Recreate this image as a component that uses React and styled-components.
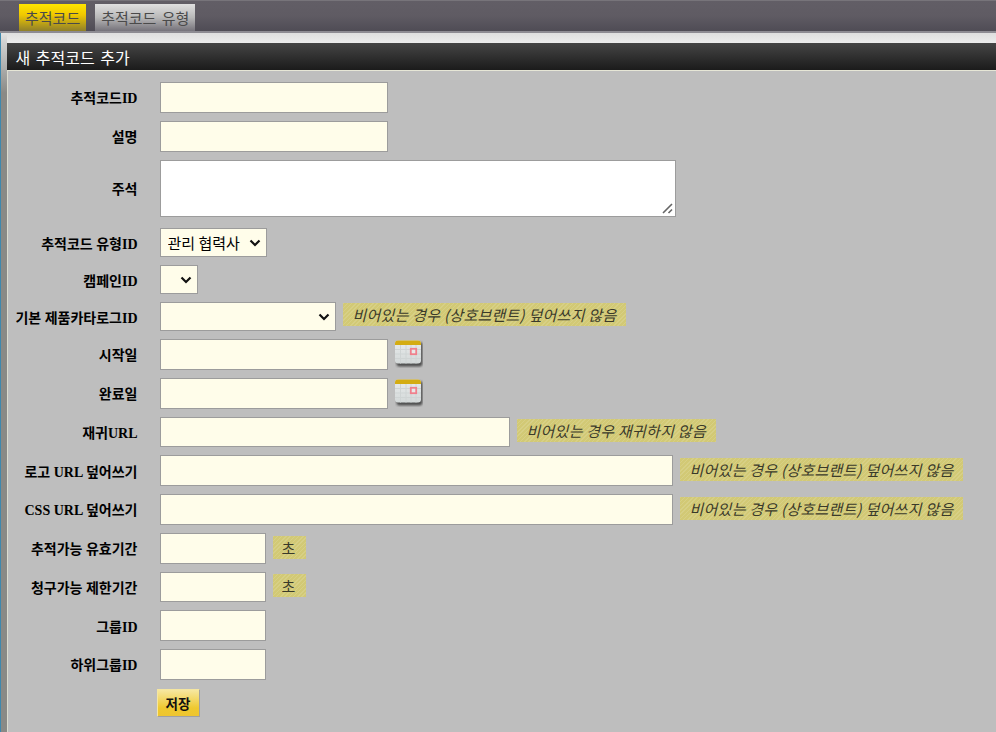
import React from 'react';
import styled, { createGlobalStyle } from 'styled-components';

const chevron =
  "url(\"data:image/svg+xml,%3Csvg xmlns='http://www.w3.org/2000/svg' width='12' height='8' viewBox='0 0 12 8'%3E%3Cpath d='M1.5 1.5 6 6l4.5-4.5' fill='none' stroke='%23111' stroke-width='2.2'/%3E%3C/svg%3E\")";

const GlobalStyle = createGlobalStyle`
  html, body {
    margin: 0;
    padding: 0;
    background-color: #bebebe;
  }
  body {
    font-family: "Liberation Serif", "Noto Sans CJK KR", serif;
    overflow: hidden;
  }
`;

const Page = styled.div`
  width: 996px;
  height: 732px;
  overflow: hidden;
  display: flex;
  flex-direction: column;
`;

const TopBar = styled.div`
  height: 33px;
  flex-shrink: 0;
  padding: 4px 0 0 19px;
  box-sizing: border-box;
  display: flex;
  gap: 9px;
  border-top: 1px solid #77747a;
  border-bottom: 2px solid #8d8b92;
  background: linear-gradient(to bottom, #625e66 0, #5f5b63 50%, #4f4c55 100%);
`;

const Tab = styled.div`
  height: 27px;
  margin-top: -1px;
  padding: 0 6px;
  display: flex;
  align-items: center;
  font-family: "Noto Sans CJK KR", sans-serif;
  font-size: 15px;
  word-spacing: 2px;
  color: #4a4a4a;
  background: ${({ active }) =>
    active
      ? 'linear-gradient(to bottom, #ffe600 0, #f0c800 40%, #8f7f2a 100%)'
      : 'linear-gradient(to bottom, #e0e0e0 0, #b8b8b8 50%, #75727a 100%)'};
`;

const Content = styled.div`
  flex: 1;
  display: flex;
  flex-direction: column;
  border-left: 1.5px solid #3f88ad;
  background: linear-gradient(to bottom, #e2e2e2 0, #d0d0d0 10px, #8a8a86 60px);
`;

const Spacer = styled.div`
  height: 10px;
  flex-shrink: 0;
  margin-left: 5.5px;
  background: linear-gradient(to bottom, #dedede, #ececec);
`;

const TitleBar = styled.div`
  height: 27px;
  flex-shrink: 0;
  margin-left: 5.5px;
  padding-left: 9px;
  box-sizing: border-box;
  display: flex;
  align-items: center;
  font-family: "Noto Sans CJK KR", sans-serif;
  font-size: 16px;
  word-spacing: 2px;
  color: #fff;
  background: linear-gradient(to bottom, #454545 0, #1b1b1b 100%);
`;

const Form = styled.div`
  flex: 1;
  margin-left: 5.5px;
  padding-top: 11px;
  border-top: 1px solid #e6e6d6;
  border-left: 1px solid #dcdcd0;
  display: flex;
  flex-direction: column;
  background-color: #bebebe;
`;

const Row = styled.div`
  display: flex;
  align-items: center;
  flex-shrink: 0;
  height: ${({ h }) => h || 30.75}px;
  margin-bottom: ${({ gap }) => (gap === undefined ? 8 : gap)}px;
`;

const Label = styled.label`
  width: 130px;
  margin-right: 22px;
  flex-shrink: 0;
  text-align: right;
  font-family: "Liberation Serif", "Noto Sans CJK KR", serif;
  font-size: 14px;
  font-weight: bold;
  color: #000;
  white-space: nowrap;
`;

const Field = styled.input`
  width: ${({ w }) => w}px;
  height: 100%;
  box-sizing: border-box;
  padding: 0 4px;
  border: 1px solid #9c9c9c;
  background-color: #fffdea;
`;

const AreaWrap = styled.div`
  position: relative;
  width: 516px;
  height: 57px;
`;

const Area = styled.textarea`
  width: 100%;
  height: 100%;
  box-sizing: border-box;
  border: 1px solid #9c9c9c;
  background-color: #fff;
  display: block;
  resize: none;
`;

const Grip = styled.svg`
  position: absolute;
  right: 3px;
  bottom: 3px;
  pointer-events: none;
`;

const Select = styled.select`
  width: ${({ w }) => w}px;
  height: 100%;
  box-sizing: border-box;
  padding: 0 0 0 7px;
  border: 1px solid #9c9c9c;
  border-radius: 0;
  appearance: none;
  background: #fffdea ${chevron} no-repeat right 5px center;
  color: #000;
  font-family: "Noto Sans CJK KR", sans-serif;
  font-size: 15px;
`;

const Hint = styled.span`
  margin-left: 7px;
  margin-bottom: ${({ raised }) => (raised ? 4 : 2)}px;
  height: 23px;
  padding: 0 10px;
  display: inline-flex;
  align-items: center;
  font-family: "Noto Sans CJK KR", sans-serif;
  font-size: 15px;
  letter-spacing: 0.25px;
  font-style: italic;
  color: #3a3a2a;
  white-space: nowrap;
  background-color: #d2c975;
  background-image: repeating-linear-gradient(135deg, rgba(255, 255, 255, 0.12) 0 1px, transparent 1px 3px);
`;

const Unit = styled(Hint)`
  padding: 0 10px 0 9px;
  font-size: 15px;
  font-style: normal;
`;

const CalendarButton = styled.button`
  margin-left: 7px;
  width: 28px;
  height: 28px;
  padding: 0;
  border: 0;
  background: none;
  display: flex;
`;

const SaveButton = styled.button`
  width: 43px;
  height: 28px;
  margin: 1px 0 0 149px;
  padding: 0;
  flex-shrink: 0;
  font-family: "Noto Sans CJK KR", sans-serif;
  font-size: 13.5px;
  font-weight: bold;
  color: #111;
  border: 1px solid;
  border-color: #f5e6a0 #a0a0a0 #a0a0a0 #f5e6a0;
  background: linear-gradient(to bottom, #f7e7a0 0, #efc92f 70%, #eec530 100%);
`;

const CalendarIcon = () => (
  <svg width="28" height="28" viewBox="0 0 28 28">
    <defs>
      <filter id="calendar-shadow" x="-20%" y="-20%" width="140%" height="140%">
        <feGaussianBlur stdDeviation="0.9" />
      </filter>
      <linearGradient id="calendar-body" x1="0" y1="0" x2="0" y2="1">
        <stop offset="0" stopColor="#e9ecec" />
        <stop offset="1" stopColor="#d3d8d8" />
      </linearGradient>
    </defs>
    <rect x="1.5" y="2" width="26" height="24.5" rx="3" fill="#4f4f4f" filter="url(#calendar-shadow)" />
    <rect x="0" y="0.5" width="26" height="23" rx="3" fill="url(#calendar-body)" />
    <path d="M0 5V3.5A3 3 0 0 1 3 .5h20a3 3 0 0 1 3 3V5z" fill="#d4ac12" />
    <path d="M0 9.5h26M0 14h26M0 18.5h26M5.5 5v18.5M11 5v18.5M16 5v18.5M21 5v18.5" stroke="#cfd4d4" fill="none" />
    <rect x="15.8" y="8.8" width="5.4" height="5.4" fill="#e8e8e8" stroke="#f0808c" strokeWidth="1.8" />
  </svg>
);

const fields = [
  { label: '추적코드ID', kind: 'input', w: 228 },
  { label: '설명', kind: 'input', w: 228 },
  { label: '주석', kind: 'area', h: 57, gap: 11.5 },
  { label: '추적코드 유형ID', kind: 'select', w: 107, value: '관리 협력사', h: 29 },
  { label: '캠페인ID', kind: 'select', w: 38, h: 29 },
  { label: '기본 제품카타로그ID', kind: 'select', w: 176, h: 29, raised: true, hint: '비어있는 경우 (상호브랜트) 덮어쓰지 않음' },
  { label: '시작일', kind: 'date' },
  { label: '완료일', kind: 'date' },
  { label: '재귀URL', kind: 'input', w: 350, hint: '비어있는 경우 재귀하지 않음' },
  { label: '로고 URL 덮어쓰기', kind: 'input', w: 513, hint: '비어있는 경우 (상호브랜트) 덮어쓰지 않음' },
  { label: 'CSS URL 덮어쓰기', kind: 'input', w: 513, hint: '비어있는 경우 (상호브랜트) 덮어쓰지 않음' },
  { label: '추적가능 유효기간', kind: 'input', w: 106, unit: '초' },
  { label: '청구가능 제한기간', kind: 'input', w: 106, unit: '초' },
  { label: '그룹ID', kind: 'input', w: 106 },
  { label: '하위그룹ID', kind: 'input', w: 106 },
];

const renderControl = (item) => {
  if (item.kind === 'area') {
    return (
      <AreaWrap>
        <Area />
        <Grip width="11" height="11" viewBox="0 0 11 11">
          <path d="M1 10 10 1M6.5 10 10 6.5" stroke="#666" strokeWidth="1.6" fill="none" />
        </Grip>
      </AreaWrap>
    );
  }
  if (item.kind === 'select') {
    return (
      <Select w={item.w} defaultValue={item.value || ''}>
        <option value={item.value || ''}>{item.value || ''}</option>
      </Select>
    );
  }
  if (item.kind === 'date') {
    return (
      <>
        <Field w={228} />
        <CalendarButton>
          <CalendarIcon />
        </CalendarButton>
      </>
    );
  }
  return <Field w={item.w} />;
};

const App = () => (
  <>
    <GlobalStyle />
    <Page>
      <TopBar>
        <Tab active>추적코드</Tab>
        <Tab>추적코드 유형</Tab>
      </TopBar>
      <Content>
        <Spacer />
        <TitleBar>새 추적코드 추가</TitleBar>
        <Form>
          {fields.map((item) => (
            <Row key={item.label} h={item.h} gap={item.gap}>
              <Label>{item.label}</Label>
              {renderControl(item)}
              {item.hint && <Hint raised={item.raised}>{item.hint}</Hint>}
              {item.unit && <Unit>{item.unit}</Unit>}
            </Row>
          ))}
          <SaveButton>저장</SaveButton>
        </Form>
      </Content>
    </Page>
  </>
);

export default App;
